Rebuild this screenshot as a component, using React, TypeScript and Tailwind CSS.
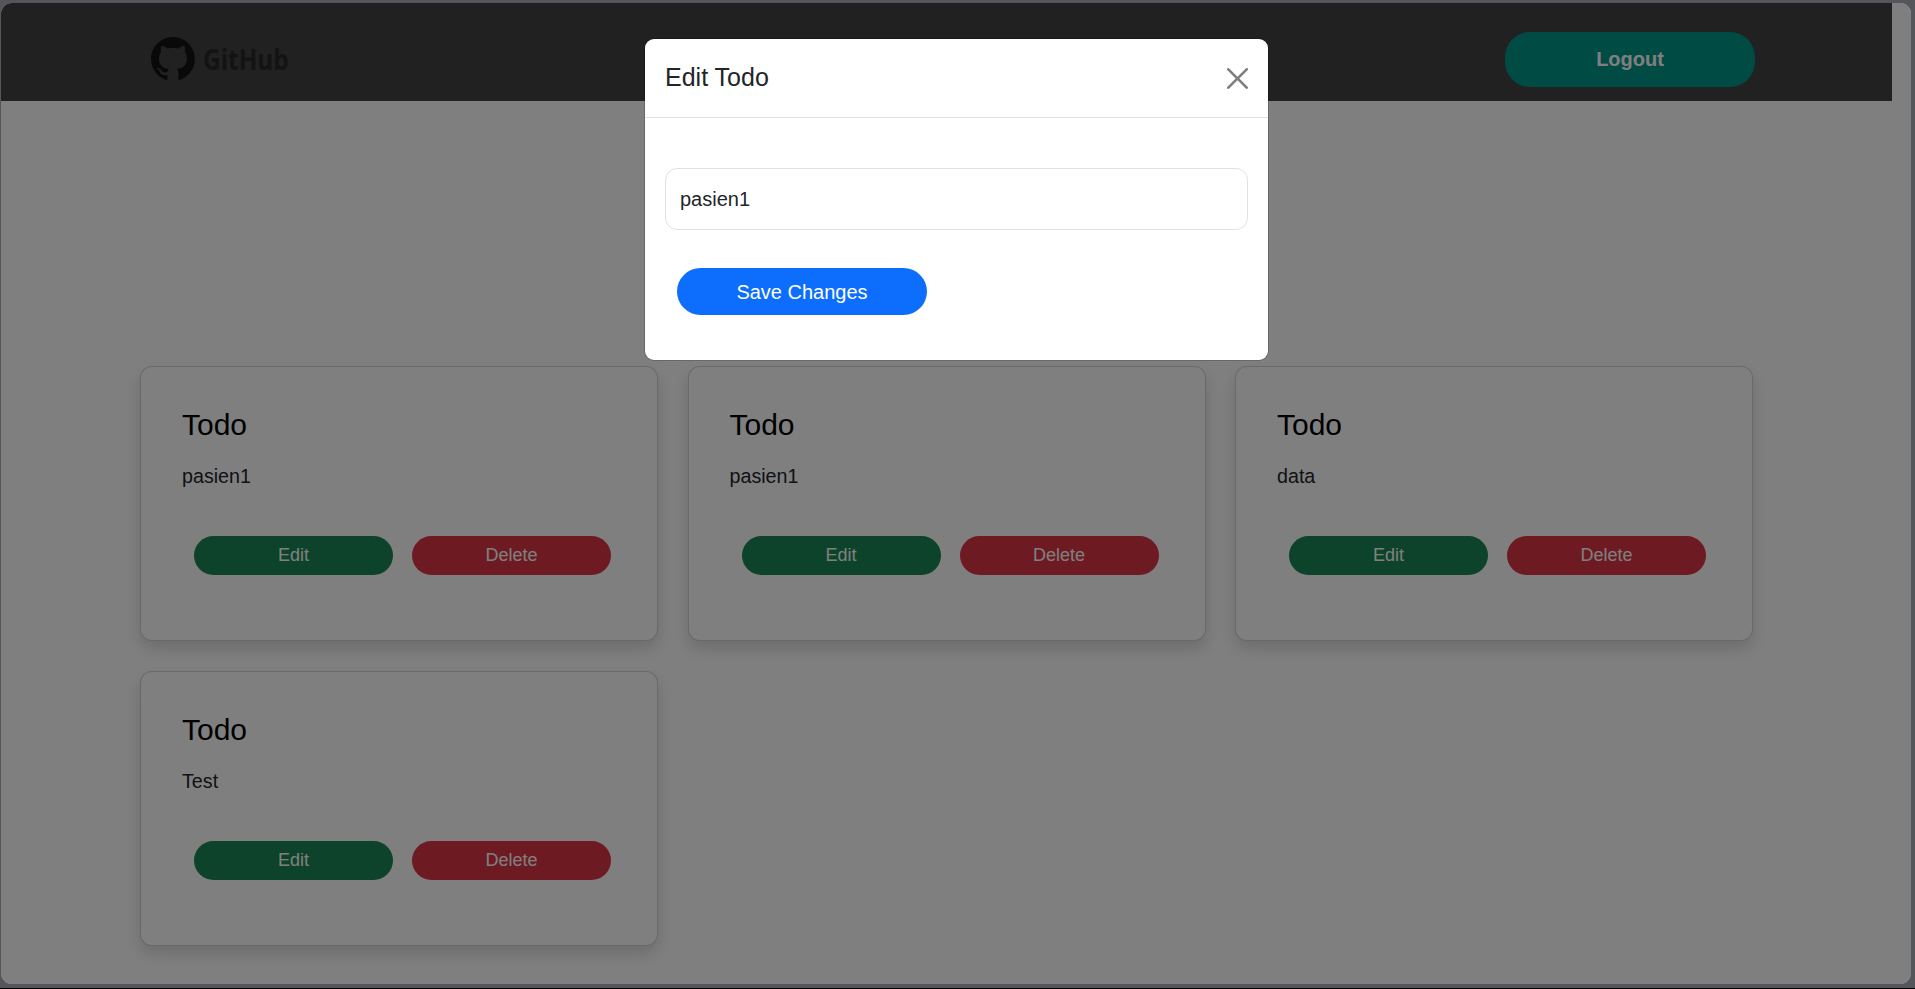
import type { ReactNode } from "react";

type Todo = { id: number; text: string };

const todos: Todo[] = [
  { id: 1, text: "pasien1" },
  { id: 2, text: "pasien1" },
  { id: 3, text: "data" },
  { id: 4, text: "Test" },
];

function PillButton({ className, children }: { className: string; children: ReactNode }) {
  return (
    <button className={`flex h-[39px] w-[199px] items-center justify-center rounded-[20px] text-[18px] leading-[27px] text-white ${className}`}>
      {children}
    </button>
  );
}

function Logo() {
  return (
    <div className="mt-[17px] flex h-[50px] w-[150px] items-start pt-px pl-px">
      <svg width="44" height="44" viewBox="0 0 98 98" fill="#131313" className="shrink-0">
        <path
          fillRule="evenodd"
          clipRule="evenodd"
          d="M48.854 0C21.839 0 0 22 0 49.217c0 21.756 13.993 40.172 33.405 46.69 2.427.49 3.316-1.059 3.316-2.362 0-1.141-.08-5.052-.08-9.127-13.59 2.934-16.42-5.867-16.42-5.867-2.184-5.704-5.42-7.17-5.42-7.17-4.448-3.015.324-3.015.324-3.015 4.934.326 7.523 5.052 7.523 5.052 4.367 7.496 11.404 5.378 14.235 4.074.404-3.178 1.699-5.378 3.074-6.6-10.839-1.141-22.243-5.378-22.243-24.283 0-5.378 1.94-9.778 5.014-13.2-.485-1.222-2.184-6.275.486-13.038 0 0 4.125-1.304 13.426 5.052a46.97 46.97 0 0 1 12.214-1.63c4.125 0 8.33.571 12.213 1.63 9.302-6.356 13.427-5.052 13.427-5.052 2.67 6.763.97 11.816.485 13.038 3.155 3.422 5.015 7.822 5.015 13.2 0 18.905-11.404 23.06-22.324 24.283 1.78 1.548 3.316 4.481 3.316 9.126 0 6.6-.08 11.897-.08 13.526 0 1.304.89 2.853 3.316 2.364 19.412-6.52 33.405-24.935 33.405-46.691C97.707 22 75.788 0 48.854 0z"
        />
      </svg>
      <span className="ml-[8px] origin-left scale-x-[0.84] pt-px font-['Open_Sans',sans-serif] text-[29px] leading-[42px] font-bold text-[#262626]">
        GitHub
      </span>
    </div>
  );
}

function TodoCard({ todo }: { todo: Todo }) {
  return (
    <article className="h-[275px] rounded-[12px] border border-black/[0.175] bg-white px-[41px] pt-[40px] shadow-[0_8px_16px_rgba(0,0,0,0.15)]">
      <h2 className="text-[30px] leading-[36px] text-black">Todo</h2>
      <p className="mt-[18px] text-[19.7px] leading-[30px] text-[#212529]">{todo.text}</p>
      <div className="mt-[45px] flex gap-[19px] pl-[12px]">
        <PillButton className="bg-[#198754]">Edit</PillButton>
        <PillButton className="bg-[#dc3545]">Delete</PillButton>
      </div>
    </article>
  );
}

function EditModal() {
  return (
    <div className="absolute inset-0 flex items-start justify-center bg-black/50 pt-[36px]">
      <section className="ml-px h-[321px] w-[623px] rounded-[9px] bg-white shadow-[0_0_0_1px_rgba(0,0,0,0.175)]">
        <header className="flex h-[79px] items-center justify-between border-b border-[#dee2e6] px-[20px]">
          <h1 className="pb-[2px] text-[25px] leading-[37px] text-[#212529]">Edit Todo</h1>
          <svg width="21" height="21" viewBox="0 0 16 16" fill="#000" className="opacity-50">
            <path d="M.293.293a1 1 0 0 1 1.414 0L8 6.586 14.293.293a1 1 0 1 1 1.414 1.414L9.414 8l6.293 6.293a1 1 0 0 1-1.414 1.414L8 9.414l-6.293 6.293a1 1 0 0 1-1.414-1.414L6.586 8 .293 1.707a1 1 0 0 1 0-1.414z" />
          </svg>
        </header>
        <div className="px-[20px] pt-[50px]">
          <input
            defaultValue="pasien1"
            className="block h-[62px] w-full rounded-[12px] border border-[#dee2e6] px-[14px] text-[20px] text-[#212529] outline-none"
          />
          <button className="mt-[38px] ml-[12px] flex h-[47px] w-[250px] items-center justify-center rounded-[25px] bg-[#0d6efd] text-[20px] text-white">
            Save Changes
          </button>
        </div>
      </section>
    </div>
  );
}

export default function App() {
  return (
    <div className="h-[989px] w-[1915px] overflow-hidden border-b border-black bg-[#55565c] pt-[3px] pl-px font-['Liberation_Sans',Arial,sans-serif]">
      <div className="relative h-[981px] w-[1910px] overflow-hidden rounded-[11px] bg-white">
        <nav className="flex h-[98px] w-[1891px] items-center justify-between bg-[#424242] pr-[137px] pl-[149px]">
          <Logo />
          <button className="mt-[15px] mb-[1px] flex h-[55px] w-[250px] items-center justify-center rounded-[25px] bg-[#009688] text-[20px] font-bold text-white">
            Logout
          </button>
        </nav>
        <main className="grid grid-cols-[518px_518px_518px] gap-x-[29.5px] gap-y-[30px] pt-[265px] pl-[139px]">
          {todos.map((todo) => (
            <TodoCard key={todo.id} todo={todo} />
          ))}
        </main>
        <EditModal />
      </div>
    </div>
  );
}
